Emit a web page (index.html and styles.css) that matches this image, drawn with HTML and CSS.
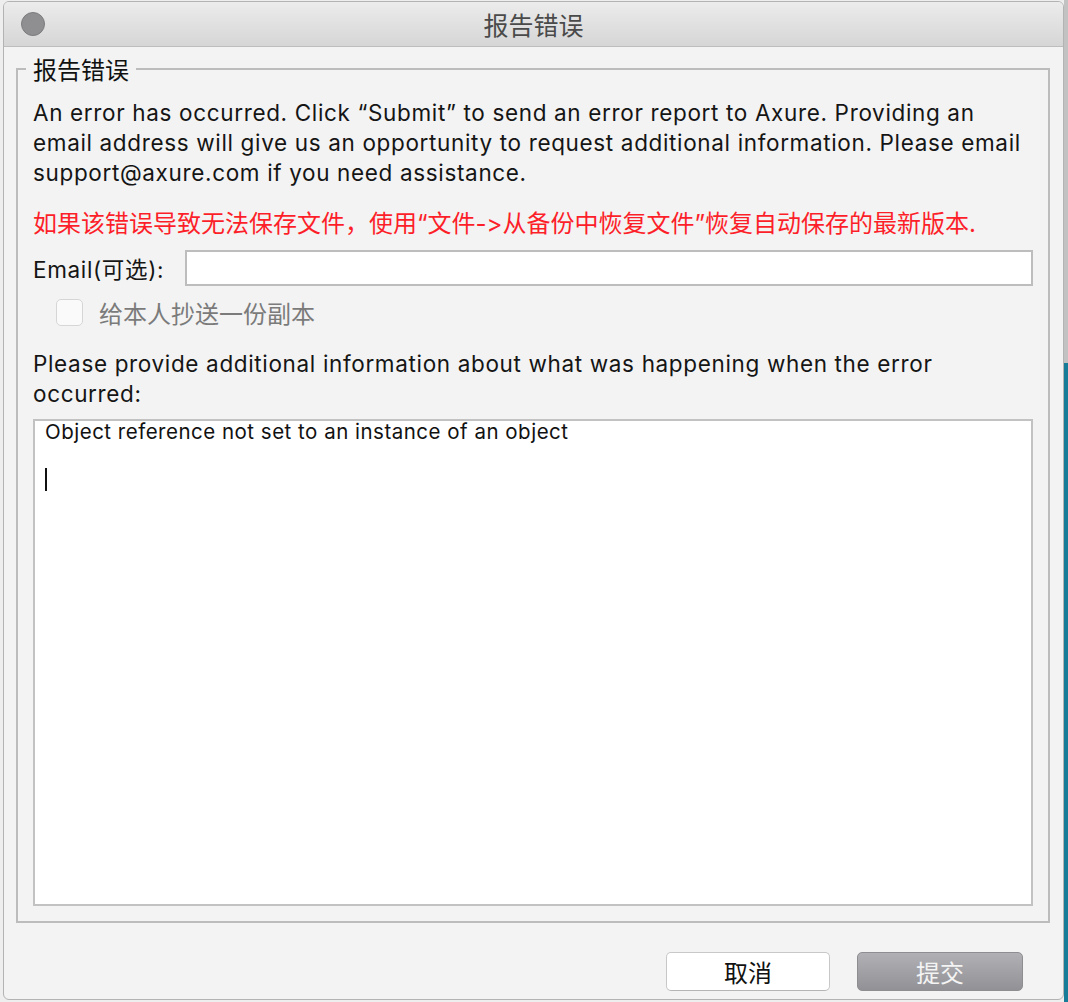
FILE: index.html
```html
<!DOCTYPE html>
<html lang="zh">
<head>
<meta charset="utf-8">
<title>报告错误</title>
<link rel="stylesheet" href="styles.css">
</head>
<body>
<div class="window">
  <div class="titlebar">
    <span class="close"></span>
    <span class="title">报告错误</span>
  </div>
  <div class="content">
    <fieldset class="group">
      <legend>报告错误</legend>
      <p class="intro">An error has occurred. Click “Submit” to send an error report to Axure. Providing an<br>email address will give us an opportunity to request additional information. Please email<br>support@axure.com if you need assistance.</p>
      <p class="warn">如果该错误导致无法保存文件，使用“文件-&gt;从备份中恢复文件”恢复自动保存的最新版本.</p>
      <div class="email-row">
        <span class="label">Email(可选):</span>
        <div class="input"></div>
      </div>
      <div class="cc-row">
        <span class="checkbox"></span>
        <span class="cc-label">给本人抄送一份副本</span>
      </div>
      <p class="prompt">Please provide additional information about what was happening when the error<br>occurred:</p>
      <div class="textarea">
        <div class="ta-line">Object reference not set to an instance of an object</div>
        <div class="caret"></div>
      </div>
    </fieldset>
    <div class="buttons">
      <button class="btn btn-cancel">取消</button>
      <button class="btn btn-submit">提交</button>
    </div>
  </div>
</div>
</body>
</html>
```
FILE: styles.css
```css
html, body {
  margin: 0;
  padding: 0;
}
body {
  width: 1068px;
  height: 1002px;
  overflow: hidden;
  background:
    linear-gradient(to bottom, #c2c2c2 0, #c2c2c2 363px, #177c97 363px) right top / 4px 100% no-repeat,
    #eeeeee;
  font-family: "Inter", "Noto Sans CJK SC", sans-serif;
  font-feature-settings: "calt" 0, "liga" 0;
  font-variant-ligatures: none;
  color: #151515;
}
.window {
  box-sizing: border-box;
  margin: 1px 4px 0 3px;
  height: 999px;
  border: 1px solid #b3b3b3;
  border-radius: 6px;
  background: #f3f3f3;
  overflow: hidden;
  display: flex;
  flex-direction: column;
}
.titlebar {
  position: relative;
  height: 44px;
  flex: none;
  background: linear-gradient(to bottom, #ececec, #d6d6d6);
  border-bottom: 1px solid #bdbdbd;
  display: flex;
  align-items: center;
  justify-content: center;
}
.close {
  position: absolute;
  left: 17px;
  top: 10px;
  width: 22px;
  height: 22px;
  border-radius: 50%;
  background: #8f8f92;
  border: 1px solid #7c7c7f;
}
.title {
  font-family: "Noto Sans CJK SC", sans-serif;
  font-size: 25px;
  line-height: 30px;
  color: #4a4a4a;
}
.content {
  flex: 1;
  padding: 7px 13px 0 12px;
  display: flex;
  flex-direction: column;
}
.group {
  margin: 0;
  padding: 14px 15px 15px 15px;
  border: 2px solid #bcbcbc;
  min-width: 0;
}
.group legend {
  font-family: "Noto Sans CJK SC", sans-serif;
  font-size: 24px;
  line-height: 30px;
  padding: 0 7px;
  margin-left: -7px;
  color: #111;
}
.intro, .prompt {
  margin: 0;
  font-size: 22.5px;
  line-height: 30px;
  letter-spacing: 0.65px;
  white-space: nowrap;
}
.warn {
  margin: 21px 0 0;
  font-size: 24px;
  line-height: 30px;
  color: #fc1f2a;
  white-space: nowrap;
}
.email-row {
  margin-top: 11px;
  display: flex;
  align-items: center;
  height: 36px;
}
.label {
  font-size: 22.5px;
  letter-spacing: 0.65px;
  width: 152px;
  flex: none;
}
.input {
  flex: 1;
  height: 36px;
  box-sizing: border-box;
  background: #fff;
  border: 2px solid #bdbdbd;
}
.cc-row {
  margin-top: 13px;
  display: flex;
  align-items: center;
  height: 27px;
  padding-left: 23px;
}
.checkbox {
  box-sizing: border-box;
  width: 27px;
  height: 27px;
  border-radius: 5px;
  border: 1px solid #d6d6d6;
  background: #fafafa;
  flex: none;
}
.cc-label {
  margin-left: 16px;
  font-family: "Noto Sans CJK SC", sans-serif;
  font-size: 24px;
  color: #7b7b7b;
}
.prompt {
  margin-top: 23px;
}
.textarea {
  margin-top: 10px;
  height: 487px;
  box-sizing: border-box;
  background: #fff;
  border: 2px solid #c2c2c2;
  padding: 0 10px;
}
.ta-line {
  font-size: 20.5px;
  line-height: 22px;
  letter-spacing: 0.5px;
  color: #111;
}
.caret {
  margin-top: 25px;
  width: 2px;
  height: 23px;
  background: #111;
}
.buttons {
  margin-top: 29px;
  display: flex;
  justify-content: flex-end;
  gap: 27px;
  padding-right: 27px;
}
.btn {
  box-sizing: border-box;
  height: 39px;
  border-radius: 5px;
  font-family: "Noto Sans CJK SC", sans-serif;
  font-size: 24px;
  line-height: 1;
  padding: 0;
}
.btn-cancel {
  width: 164px;
  background: #fff;
  border: 1px solid #c8c8c8;
  border-bottom-color: #b5b5b5;
  color: #111;
}
.btn-submit {
  width: 166px;
  background: linear-gradient(to bottom, #b1b1b5, #929296);
  border: 1px solid #8e8e92;
  color: #f4f4f4;
}
```
